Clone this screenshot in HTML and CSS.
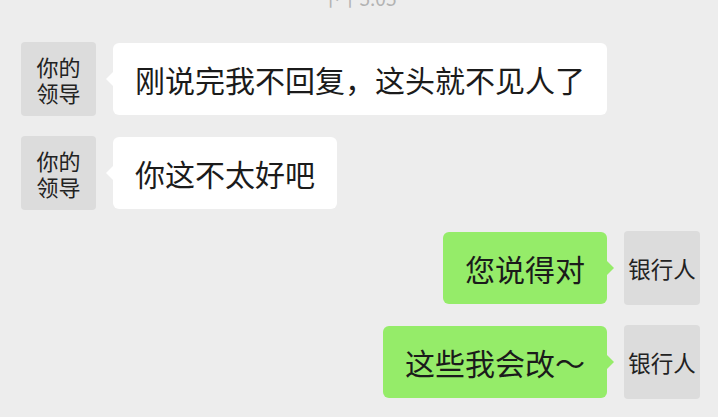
FILE: index.html
```html
<!DOCTYPE html>
<html lang="zh-CN">
<head>
  <meta charset="UTF-8">
  <title>聊天记录</title>
  <link rel="stylesheet" href="styles.css">
</head>
<body>
  <div class="time">下午5:05</div>

  <div class="chat">
    <div class="row left">
      <div class="avatar">你的<br>领导</div>
      <div class="bubble">刚说完我不回复，这头就不见人了</div>
    </div>
    <div class="row left">
      <div class="avatar">你的<br>领导</div>
      <div class="bubble">你这不太好吧</div>
    </div>
    <div class="row right">
      <div class="bubble">您说得对</div>
      <div class="avatar">银行人</div>
    </div>
    <div class="row right">
      <div class="bubble">这些我会改～</div>
      <div class="avatar">银行人</div>
    </div>
  </div>
</body>
</html>
```

FILE: styles.css
```css
body {
  margin: 0;
  background: #ededed;
  font-family: "Noto Sans CJK SC", "Noto Sans", sans-serif;
  color: #1b1b1b;
  overflow: hidden;
}
.time {
  text-align: center;
  font-size: 19px;
  line-height: 24px;
  color: #b3b3b3;
  margin-top: -14px;
}
.chat {
  display: flex;
  flex-direction: column;
  gap: 20px;
  padding: 32px 18px 0 21px;
}
.row {
  display: flex;
  align-items: flex-start;
  gap: 17px;
}
.row.right { justify-content: flex-end; }
.row.right:first-of-type, .left + .right { margin-top: 1px; }
.avatar {
  width: 75px;
  height: 74px;
  flex: none;
  background: #dcdcdc;
  border-radius: 4px;
  display: flex;
  align-items: center;
  justify-content: center;
  text-align: center;
  font-size: 22px;
  line-height: 26px;
  color: #222;
}
.right .avatar { width: 76px; font-size: 22.5px; }
.bubble {
  position: relative;
  margin-top: 1px;
  height: 72px;
  box-sizing: border-box;
  padding: 0 22px;
  display: flex;
  align-items: center;
  background: #fff;
  border-radius: 6px;
  font-size: 30px;
  white-space: nowrap;
}
.right .bubble { background: #95ec69; }
.bubble::after {
  content: "";
  position: absolute;
  top: 28px;
  border: 8px solid transparent;
}
.left .bubble::after {
  left: -15px;
  border-right-color: #fff;
}
.right .bubble::after {
  right: -15px;
  border-left-color: #95ec69;
}
```
